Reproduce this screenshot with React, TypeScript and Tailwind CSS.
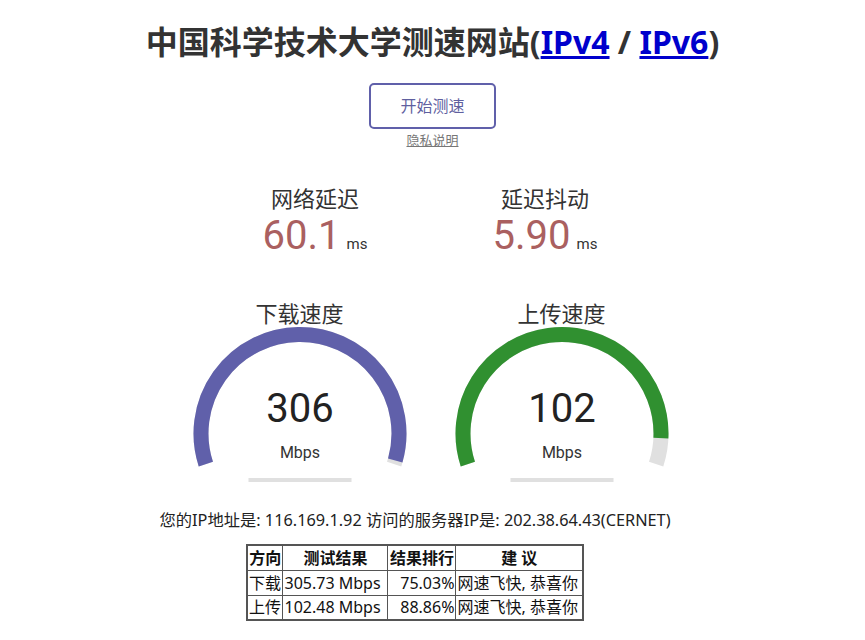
import React from "react";

const cjk = "font-['Noto_Sans','Noto_Sans_CJK_SC',sans-serif]";
const roboto = "font-['Roboto','Noto_Sans_CJK_SC',sans-serif]";

const Gauge = ({ amount, color, value }: { amount: number; color: string; value: string }) => {
  const cx = 120;
  const cy = 109.5;
  const r = 99;
  const start = -1.1 * Math.PI;
  const end = 0.1 * Math.PI;
  const pt = (a: number) => `${cx + r * Math.cos(a)} ${cy + r * Math.sin(a)}`;
  const arc = (from: number, to: number) =>
    `M ${pt(from)} A ${r} ${r} 0 ${to - from > Math.PI ? 1 : 0} 1 ${pt(to)}`;
  const stop = start + (end - start) * amount;

  return (
    <svg width="240" height="160" viewBox="0 0 240 160">
      <path d={arc(start, end)} fill="none" stroke="#E0E0E0" strokeWidth="15" />
      <path d={arc(start, stop)} fill="none" stroke={color} strokeWidth="15" />
      <rect x="68.5" y="154" width="103" height="4" fill="#E0E0E0" />
      <text x={cx} y="98" textAnchor="middle" fontSize="40" fill="#222" className={roboto}>
        {value}
      </text>
      <text x={cx} y="134" textAnchor="middle" fontSize="16" fill="#333" className={roboto}>
        Mbps
      </text>
    </svg>
  );
};

const Latency = ({ label, value }: { label: string; value: string }) => (
  <div className="w-[200px] flex flex-col items-center">
    <div className={`${cjk} text-[22px] leading-[28px] text-[#333]`}>{label}</div>
    <div className="flex items-baseline gap-[6px] mt-[2px]">
      <span className={`${roboto} text-[40px] leading-[44px] text-[#AA6060]`}>{value}</span>
      <span className={`${roboto} text-[15px] text-[#333]`}>ms</span>
    </div>
  </div>
);

const rows = [
  ["下载", "305.73 Mbps", "75.03%", "网速飞快, 恭喜你"],
  ["上传", "102.48 Mbps", "88.86%", "网速飞快, 恭喜你"],
];

export default function App() {
  return (
    <div className={`${cjk} min-h-[640px] bg-white flex flex-col items-center pt-[22px] text-[#222]`}>
      {/* 标题 */}
      <h1 className="text-[32px] leading-[40px] font-bold text-[#333]">
        中国科学技术大学测速网站(
        <a href="#" className="text-[#0000cc] underline">IPv4</a> /{" "}
        <a href="#" className="text-[#0000cc] underline">IPv6</a>)
      </h1>

      <button className="mt-[21px] w-[127px] h-[46px] border-2 border-[#6060AA] rounded-[5px] text-[16px] text-[#5f5f9f]">
        开始测速
      </button>
      <a href="#" className="mt-[3px] text-[13px] leading-[16px] text-[#777] underline">
        隐私说明
      </a>

      {/* 延迟 */}
      <div className="mt-[36px] flex justify-center gap-[30px] pr-[5px]">
        <Latency label="网络延迟" value="60.1" />
        <Latency label="延迟抖动" value="5.90" />
      </div>

      {/* 速度表 */}
      <div className="mt-[44px] flex justify-center gap-[22px] pr-[4px]">
        <div className="flex flex-col items-center">
          <div className="text-[22px] leading-[22px] text-[#333]">下载速度</div>
          <Gauge amount={0.99} color="#6060AA" value="306" />
        </div>
        <div className="flex flex-col items-center">
          <div className="text-[22px] leading-[22px] text-[#333]">上传速度</div>
          <Gauge amount={0.929} color="#309030" value="102" />
        </div>
      </div>

      {/* 结果 */}
      <div className="flex flex-col items-center pr-[35px]">
        <p className="mt-[25px] text-[16.3px] leading-[22px] text-[#222]">
          您的IP地址是: 116.169.1.92 访问的服务器IP是: 202.38.64.43(CERNET)
        </p>

        <table className="mt-[13px] table-fixed border-collapse border-2 border-[#555] text-[16px] leading-[22px] text-[#111]">
          <colgroup>
            <col className="w-[36px]" />
            <col className="w-[105px]" />
            <col className="w-[68px]" />
            <col className="w-[127px]" />
          </colgroup>
          <thead>
            <tr className="h-[25px]">
              <th className="border border-[#555] font-bold">方向</th>
              <th className="border border-[#555] font-bold">测试结果</th>
              <th className="border border-[#555] font-bold">结果排行</th>
              <th className="border border-[#555] font-bold">建 议</th>
            </tr>
          </thead>
          <tbody>
            {rows.map((r) => (
              <tr key={r[0]} className="h-[25px]">
                <td className="border border-[#555] px-[1px]">{r[0]}</td>
                <td className="border border-[#555] px-[1px] whitespace-nowrap">{r[1]}</td>
                <td className="border border-[#555] px-[1px] text-right">{r[2]}</td>
                <td className="border border-[#555] px-[1px] whitespace-nowrap">{r[3]}</td>
              </tr>
            ))}
          </tbody>
        </table>
      </div>
    </div>
  );
}
